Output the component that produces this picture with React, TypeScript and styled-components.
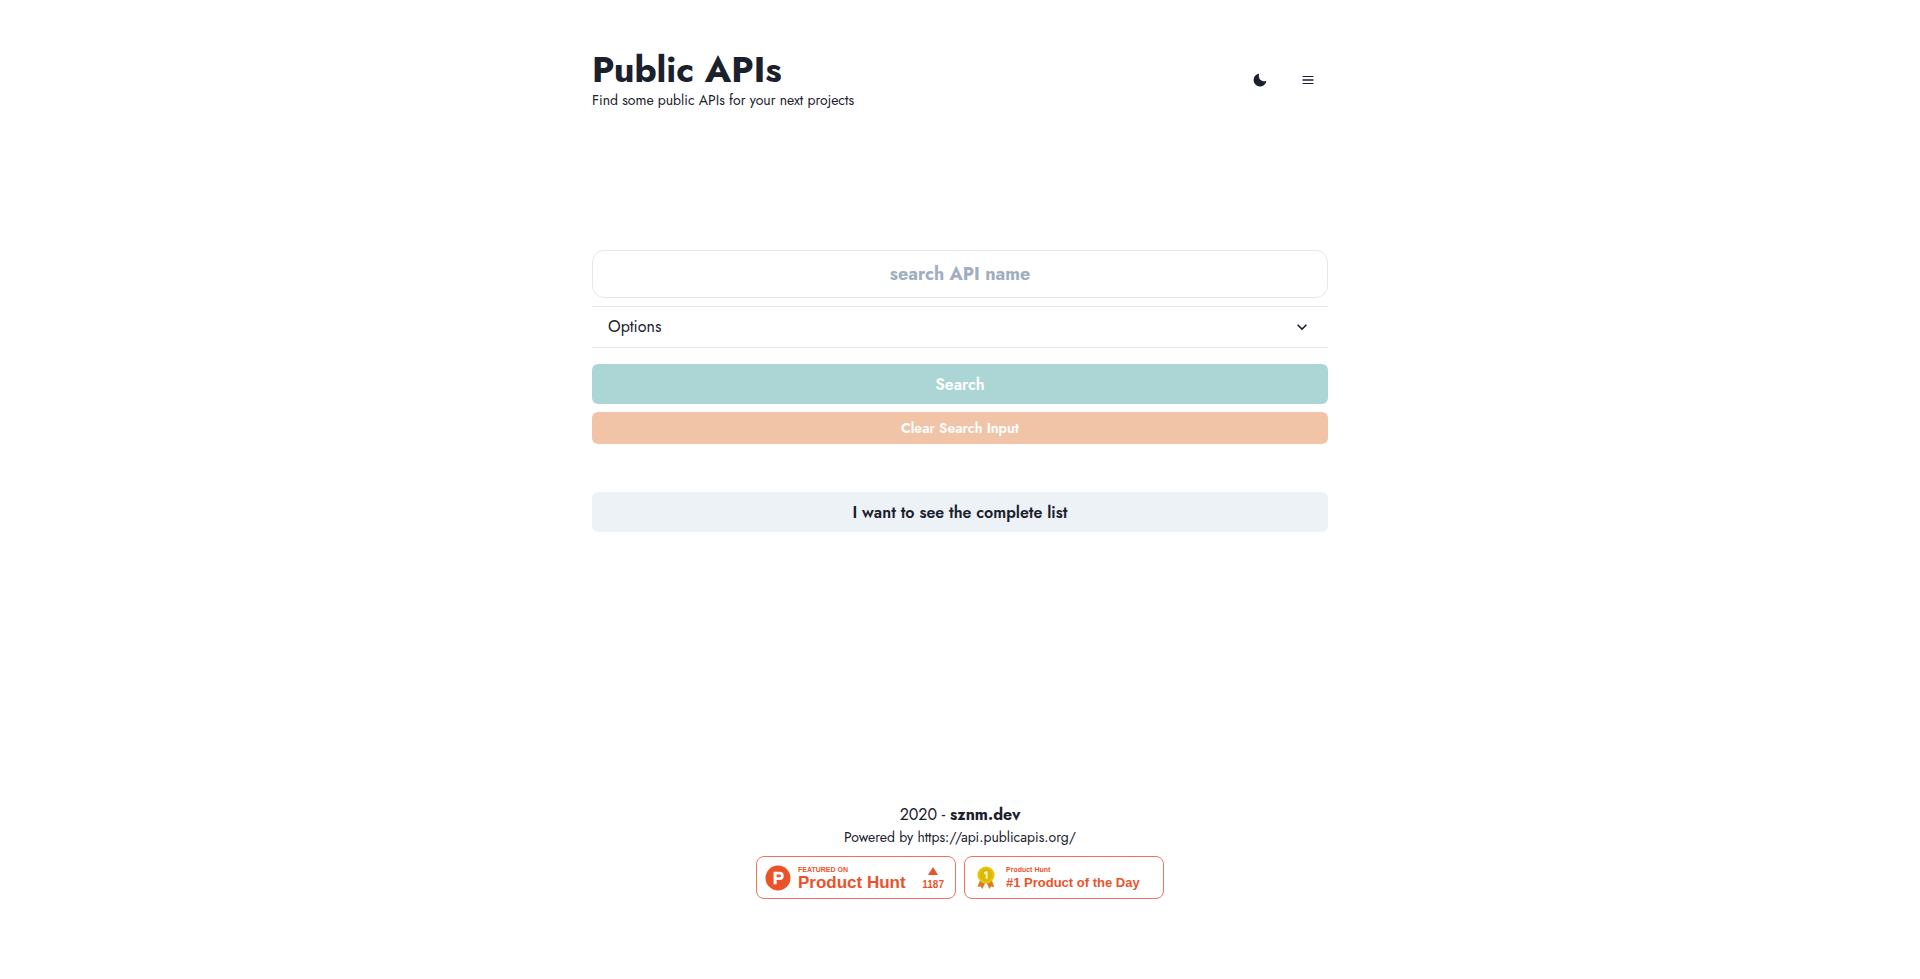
import React from "react";
import styled, { createGlobalStyle } from "styled-components";

const GlobalStyle = createGlobalStyle`
  *, *::before, *::after { box-sizing: border-box; }
  body {
    margin: 0;
    background: #ffffff;
    color: #1a202c;
    font-family: Jost, Lato, sans-serif;
    font-size: 16px;
    line-height: 24px;
  }
  h1, p { margin: 0; }
  button, input { font-family: inherit; color: inherit; }
`;

const Page = styled.div`
  display: flex;
  flex-direction: column;
  min-height: 100vh;
  max-width: 768px;
  margin: 0 auto;
  padding: 48px 16px 80px;
`;

const Header = styled.header`
  display: flex;
  align-items: center;
  justify-content: space-between;
`;

const Heading = styled.div`
  padding-bottom: 2px;
`;

const Title = styled.h1`
  font-size: 36px;
  font-weight: 700;
  line-height: 42px;
`;

const Subtitle = styled.p`
  font-size: 14px;
  line-height: 20px;
`;

const Actions = styled.div`
  display: flex;
  gap: 8px;
`;

const IconButton = styled.button`
  display: flex;
  align-items: center;
  justify-content: center;
  width: 40px;
  height: 40px;
  padding: 0;
  border: 0;
  border-radius: 6px;
  background: transparent;
  cursor: pointer;
`;

const Main = styled.main`
  display: flex;
  flex: 1;
  flex-direction: column;
  margin: 138px 0 48px;
`;

const SearchForm = styled.form`
  display: flex;
  flex-direction: column;
  gap: 8px;
`;

const SearchInput = styled.input`
  width: 100%;
  height: 48px;
  padding: 0 16px;
  border: 1px solid #e2e8f0;
  border-radius: 12px;
  background: transparent;
  font-size: 18px;
  font-weight: 700;
  text-align: center;
  &::placeholder { color: #a0aec0; opacity: 1; }
`;

const OptionsToggle = styled.button`
  display: flex;
  align-items: center;
  justify-content: space-between;
  height: 42px;
  margin-bottom: 8px;
  padding: 0 16px;
  border: solid #e2e8f0;
  border-width: 1px 0;
  background: transparent;
  font-size: 16px;
  line-height: 24px;
  cursor: pointer;
`;

const Button = styled.button<{ $bg: string; $color?: string; $small?: boolean }>`
  width: 100%;
  height: ${(p) => (p.$small ? 32 : 40)}px;
  padding: 0 16px;
  border: 0;
  border-radius: 6px;
  background: ${(p) => p.$bg};
  color: ${(p) => p.$color ?? "#ffffff"};
  font-size: ${(p) => (p.$small ? 14 : 16)}px;
  font-weight: 600;
`;

const ListSection = styled.section`
  margin-top: 48px;
`;

const Footer = styled.footer`
  display: flex;
  flex-direction: column;
  align-items: center;
  text-align: center;
`;

const FooterLink = styled.a<{ $bold?: boolean }>`
  color: inherit;
  font-weight: ${(p) => (p.$bold ? 700 : 400)};
  text-decoration: none;
`;

const Powered = styled.p`
  font-size: 14px;
  line-height: 21px;
`;

const Badges = styled.div`
  display: flex;
  flex-wrap: wrap;
  justify-content: center;
  gap: 8px;
  margin-top: 8px;
`;

const Badge = styled.a`
  display: flex;
  align-items: center;
  width: 200px;
  height: 43px;
  padding: 0 11px 0 8px;
  border: 1px solid #f0735a;
  border-radius: 8px;
  color: #ea532a;
  font-family: "Liberation Sans", Arial, sans-serif;
  font-weight: 700;
  text-align: left;
  text-decoration: none;
  white-space: nowrap;
`;

const BadgeText = styled.span`
  display: flex;
  flex: 1;
  flex-direction: column;
  margin-left: 7px;
  padding-top: 2px;
`;

const BadgeCaption = styled.span`
  font-size: 7px;
  line-height: 8px;
`;

const BadgeName = styled.span<{ $size: number }>`
  font-size: ${(p) => p.$size}px;
  line-height: 18px;
`;

const Votes = styled.span`
  display: flex;
  flex-direction: column;
  align-items: center;
  gap: 4px;
  padding-top: 2px;
  font-size: 10px;
  line-height: 12px;
`;

const MoonIcon = () => (
  <svg width="14" height="14" viewBox="0 0 24 24" aria-hidden="true">
    <path
      fill="currentColor"
      d="M21.4,13.7C20.6,13.9,19.8,14,19,14c-5,0-9-4-9-9c0-0.8,0.1-1.6,0.3-2.4c0.1-0.3,0-0.7-0.3-1c-0.3-0.3-0.6-0.4-1-0.3C4.3,2.7,1,7.1,1,12c0,6.1,4.9,11,11,11c4.9,0,9.3-3.3,10.6-8.1c0.1-0.3,0-0.7-0.3-1C22.1,13.7,21.7,13.6,21.4,13.7z"
    />
  </svg>
);

const MenuIcon = () => (
  <svg width="14" height="14" viewBox="0 0 14 14" aria-hidden="true">
    <path fill="currentColor" d="M1.5 3h11v1h-11zM1.5 6.3h11v1.4h-11zM1.5 10h11v1h-11z" />
  </svg>
);

const ChevronIcon = () => (
  <svg width="20" height="20" viewBox="0 0 24 24" aria-hidden="true">
    <path fill="currentColor" d="M16.59 8.59L12 13.17 7.41 8.59 6 10l6 6 6-6z" />
  </svg>
);

const ProductHuntLogo = () => (
  <svg width="26" height="26" viewBox="0 0 26 26" aria-hidden="true">
    <circle cx="13" cy="13" r="12.5" fill="#ea532a" />
    <path
      fill="#ffffff"
      fillRule="evenodd"
      d="M8.6 6.8h6a4.1 4.1 0 0 1 0 8.2h-3v4.2h-3zM11.6 9.5v2.8h3a1.4 1.4 0 0 0 0-2.8z"
    />
  </svg>
);

const MedalIcon = () => (
  <svg width="26" height="26" viewBox="0 0 26 26" aria-hidden="true">
    <path fill="#df7b1c" d="M7.4 14.5 4.4 22l3.3-.5 1.8 2.6 3-7zM18.4 14.5l3 7.5-3.3-.5-1.8 2.6-3-7z" />
    <circle cx="13" cy="10" r="8.6" fill="#e5c80e" />
    <circle cx="13" cy="10" r="6.4" fill="#dcb900" />
    <path fill="#fff7cf" d="M12.9 6.2h1.6v7.5h-1.8V8.5l-1.8.7V7.5z" />
  </svg>
);

const UpvoteIcon = () => (
  <svg width="10" height="8" viewBox="0 0 10 8" aria-hidden="true">
    <path fill="currentColor" d="M5 0l5 8H0z" />
  </svg>
);

export default function App() {
  return (
    <>
      <GlobalStyle />
      <Page>
        <Header>
          <Heading>
            <Title>Public APIs</Title>
            <Subtitle>Find some public APIs for your next projects</Subtitle>
          </Heading>
          <Actions>
            <IconButton type="button" aria-label="Switch to dark mode">
              <MoonIcon />
            </IconButton>
            <IconButton type="button" aria-label="Open menu">
              <MenuIcon />
            </IconButton>
          </Actions>
        </Header>

        <Main>
          <SearchForm onSubmit={(e) => e.preventDefault()}>
            <SearchInput type="text" aria-label="search API name" placeholder="search API name" />
            <OptionsToggle type="button" aria-expanded="false">
              Options
              <ChevronIcon />
            </OptionsToggle>
            <Button type="submit" disabled $bg="#acd5d5">
              Search
            </Button>
            <Button type="reset" disabled $small $bg="#f1c4a7">
              Clear Search Input
            </Button>
          </SearchForm>
          <ListSection>
            <Button type="button" $bg="#edf2f7" $color="#1a202c">
              I want to see the complete list
            </Button>
          </ListSection>
        </Main>

        <Footer>
          <p>
            2020 -{" "}
            <FooterLink $bold href="https://sznm.dev">
              sznm.dev
            </FooterLink>
          </p>
          <Powered>
            <FooterLink href="https://api.publicapis.org/">Powered by https://api.publicapis.org/</FooterLink>
          </Powered>
          <Badges>
            <Badge href="https://www.producthunt.com/">
              <ProductHuntLogo />
              <BadgeText>
                <BadgeCaption>FEATURED ON</BadgeCaption>
                <BadgeName $size={17}>Product Hunt</BadgeName>
              </BadgeText>
              <Votes>
                <UpvoteIcon />
                1187
              </Votes>
            </Badge>
            <Badge href="https://www.producthunt.com/">
              <MedalIcon />
              <BadgeText>
                <BadgeCaption>Product Hunt</BadgeCaption>
                <BadgeName $size={13}>#1 Product of the Day</BadgeName>
              </BadgeText>
            </Badge>
          </Badges>
        </Footer>
      </Page>
    </>
  );
}
